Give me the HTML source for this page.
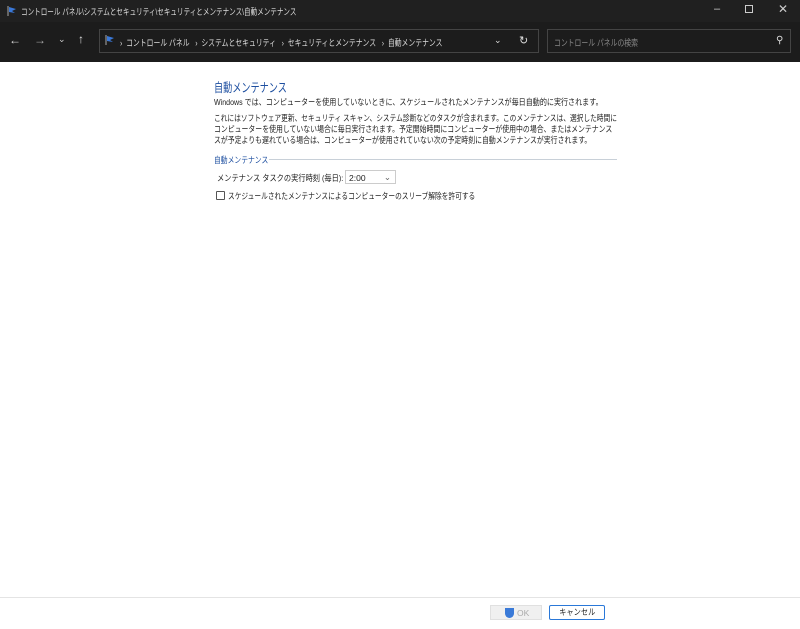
<!DOCTYPE html>
<html><head><meta charset="utf-8"><style>
*{margin:0;padding:0;box-sizing:border-box}
body{width:800px;height:629px;overflow:hidden;background:#fff;font-family:"Liberation Sans","Noto Sans CJK JP",sans-serif;position:relative}
.a{position:absolute;white-space:nowrap;transform-origin:0 0}
#title{left:0;top:0;width:800px;height:22px;background:#202020}
#nav{left:0;top:22px;width:800px;height:40px;background:#1c1c1c}
.t{font-size:9px;color:#ddd}
.c{font-size:8.5px;color:#222}
</style></head><body>
<div id="title" class="a"></div>
<div id="nav" class="a"></div>
<svg class="a" style="left:6px;top:5px" width="12" height="12"><path d="M2 1v10" stroke="#aaa"/><path d="M3 2l7 2-4 2 3 2-6-1z" fill="#3a78d8"/></svg>
<div class="a t" style="left:21px;top:5px;transform:scaleX(0.73)">コントロール パネル\システムとセキュリティ\セキュリティとメンテナンス\自動メンテナンス</div>
<div class="a" style="left:714px;top:3px;color:#ccc;font-size:11px">–</div>
<div class="a" style="left:745px;top:5px;width:8px;height:8px;border:1px solid #ccc"></div>
<div class="a" style="left:778px;top:2px;color:#ccc;font-size:12px">✕</div>
<div class="a" style="left:9px;top:33px;color:#ddd;font-size:12px">←</div>
<div class="a" style="left:34px;top:33px;color:#aaa;font-size:12px">→</div>
<div class="a" style="left:58px;top:34px;color:#ccc;font-size:9px">⌄</div>
<div class="a" style="left:78px;top:32px;color:#ddd;font-size:12px">↑</div>
<div class="a" style="left:99px;top:29px;width:440px;height:24px;border:1px solid #444;background:#1c1c1c"></div>
<svg class="a" style="left:104px;top:34px" width="12" height="12"><path d="M2 1v10" stroke="#aaa"/><path d="M3 2l7 2-4 2 3 2-6-1z" fill="#3a78d8"/></svg>
<div class="a t" style="left:120px;top:36px;transform:scaleX(0.76)">›&nbsp;&nbsp;コントロール パネル&nbsp;&nbsp;&nbsp;›&nbsp;&nbsp;システムとセキュリティ&nbsp;&nbsp;&nbsp;›&nbsp;&nbsp;セキュリティとメンテナンス&nbsp;&nbsp;&nbsp;›&nbsp;&nbsp;自動メンテナンス</div>
<div class="a t" style="left:494px;top:35px">⌄</div>
<div class="a t" style="left:519px;top:34px;font-size:11px">↻</div>
<div class="a" style="left:547px;top:29px;width:244px;height:24px;border:1px solid #444"></div>
<div class="a" style="left:554px;top:36px;font-size:9px;color:#888;transform:scaleX(0.76)">コントロール パネルの検索</div>
<div class="a t" style="left:776px;top:35px;font-size:10px">⚲</div>
<div class="a" style="left:214px;top:77px;font-size:12.5px;color:#1e4fa0;transform:scaleX(0.73)">自動メンテナンス</div>
<div class="a c" style="left:214px;top:96px;transform:scaleX(0.83)">Windows では、コンピューターを使用していないときに、スケジュールされたメンテナンスが毎日自動的に実行されます。</div>
<div class="a c" style="left:214px;top:112px;transform:scaleX(0.79)">これにはソフトウェア更新、セキュリティ スキャン、システム診断などのタスクが含まれます。このメンテナンスは、選択した時間に</div>
<div class="a c" style="left:214px;top:123px;transform:scaleX(0.81)">コンピューターを使用していない場合に毎日実行されます。予定開始時間にコンピューターが使用中の場合、またはメンテナンス</div>
<div class="a c" style="left:214px;top:134px;transform:scaleX(0.81)">スが予定よりも遅れている場合は、コンピューターが使用されていない次の予定時刻に自動メンテナンスが実行されます。</div>
<div class="a" style="left:214px;top:154px;font-size:8.5px;color:#1e4fa0;transform:scaleX(0.8)">自動メンテナンス</div>
<div class="a" style="left:269px;top:159px;width:348px;height:1px;background:#c8d0d8"></div>
<div class="a c" style="left:217px;top:172px;transform:scaleX(0.85)">メンテナンス タスクの実行時刻 (毎日):</div>
<div class="a" style="left:345px;top:170px;width:51px;height:14px;border:1px solid #ccc;font-size:8.5px;padding:2px 3px;color:#222">2:00<span style="position:absolute;right:4px;top:1px;color:#666">⌄</span></div>
<div class="a" style="left:216px;top:191px;width:9px;height:9px;border:1px solid #555;border-radius:1px"></div>
<div class="a c" style="left:228px;top:190px;transform:scaleX(0.79)">スケジュールされたメンテナンスによるコンピューターのスリープ解除を許可する</div>
<div class="a" style="left:0;top:597px;width:800px;height:1px;background:#e4e4e4"></div>
<div class="a" style="left:490px;top:605px;width:52px;height:15px;background:#f0f0f0;border:1px solid #e0e0e0;font-size:8.5px;color:#aaa;padding:2px 0 0 14px"><span style="position:absolute;left:14px;top:2px;width:9px;height:10px;background:#3a7ad8;border-radius:0 0 5px 5px"></span><span style="margin-left:12px">OK</span></div>
<div class="a" style="left:549px;top:605px;width:56px;height:15px;border:1px solid #2a78d8;border-radius:2px;font-size:8.5px;color:#222;text-align:center;line-height:13px"><span style="display:inline-block;transform:scaleX(0.85)">キャンセル</span></div>
</body></html>
